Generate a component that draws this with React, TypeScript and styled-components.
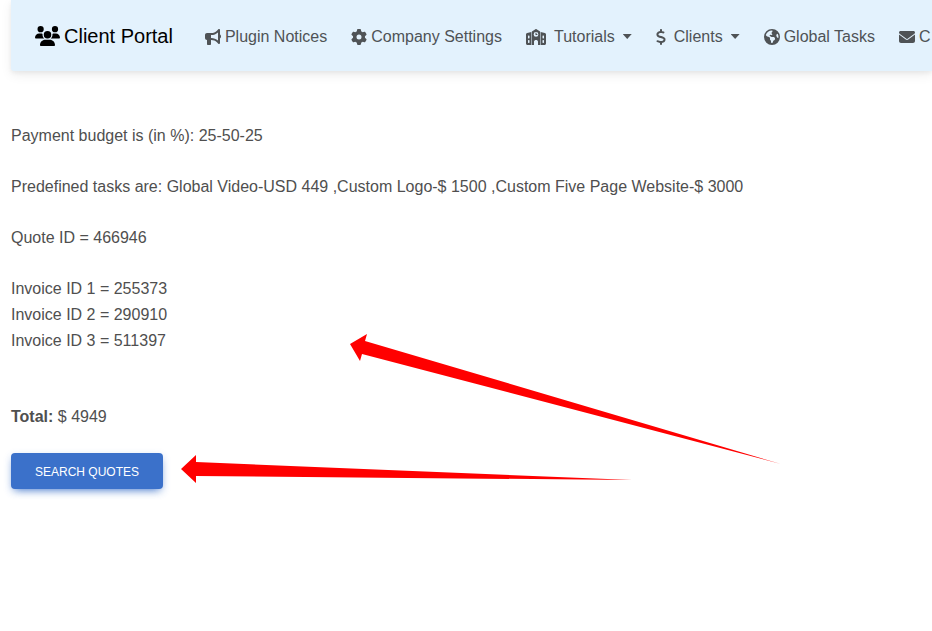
import React from "react";
import styled, { createGlobalStyle } from "styled-components";
import {
  FaBullhorn,
  FaDollarSign,
  FaEarthAmericas,
  FaEnvelope,
  FaGear,
  FaUsers,
} from "react-icons/fa6";

const GlobalStyle = createGlobalStyle`
  *, *::before, *::after { box-sizing: border-box; }
  body {
    margin: 0;
    background: #fff;
    color: #4f4f4f;
    font-family: "Liberation Sans", Arial, sans-serif;
    font-size: 16px;
    line-height: 26px;
  }
`;

const Page = styled.div`
  min-height: 100vh;
  padding-left: 11px;
  overflow: hidden;
`;

const Navbar = styled.header`
  display: flex;
  align-items: center;
  gap: 32px;
  height: 71px;
  padding-left: 24px;
  white-space: nowrap;
  background: #e3f2fd;
  border-radius: 0 0 0 3px;
  box-shadow: 0 4px 12px rgba(0, 0, 0, 0.07), 0 2px 4px rgba(0, 0, 0, 0.05);
`;

const Brand = styled.a`
  display: flex;
  flex: none;
  align-items: center;
  gap: 4px;
  color: #000;
  font-size: 20px;
  text-decoration: none;

  svg {
    width: 25px;
    height: 20px;
  }
`;

const NavList = styled.nav`
  display: flex;
  flex: none;
  align-items: center;
  gap: 24px;
  padding-top: 2px;
`;

const NavLink = styled.a<{ $gap: number; $icon: number }>`
  display: flex;
  align-items: center;
  gap: ${({ $gap }) => $gap}px;
  color: #4f5356;
  text-decoration: none;

  svg {
    width: ${({ $icon }) => $icon}px;
    height: 16px;
  }
`;

const NavButton = styled(NavLink).attrs({ as: "button", type: "button" })`
  padding: 0;
  border: 0;
  background: none;
  font: inherit;
  cursor: pointer;

  &::after {
    content: "";
    width: 9px;
    height: 5px;
    background: currentColor;
    clip-path: polygon(0 0, 100% 0, 50% 100%);
  }
`;

const Content = styled.main`
  display: flex;
  flex-direction: column;
  align-items: flex-start;
  gap: 25px;
  padding-top: 52px;
`;

const Line = styled.p`
  margin: 0;
`;

const Invoices = styled.ul`
  margin: 0 0 25px;
  padding: 0;
  list-style: none;
`;

const Summary = styled.div`
  display: flex;
  flex-direction: column;
  align-items: flex-start;
  gap: 23px;
`;

const SearchButton = styled.button`
  height: 36px;
  padding: 1px 24px 0;
  border: 0;
  border-radius: 4px;
  background: #3b71ca;
  color: #fff;
  font: inherit;
  font-size: 12px;
  font-weight: 500;
  line-height: 20px;
  text-transform: uppercase;
  box-shadow: 0 4px 9px -4px #3b71ca, 0 3px 8px rgba(59, 113, 202, 0.2);
  cursor: pointer;
`;

const Annotations = styled.svg`
  position: absolute;
  top: 0;
  left: 0;
  pointer-events: none;
`;

function SchoolIcon() {
  return (
    <svg viewBox="0 0 640 512" fill="currentColor" fillRule="evenodd" aria-hidden="true">
      <path d="M0 172C0 149 16 130 38 125L172 95V512H48C21 512 0 491 0 464ZM64 224V288C64 297 71 304 80 304H96C105 304 112 297 112 288V224C112 215 105 208 96 208H80C71 208 64 215 64 224ZM64 368V432C64 441 71 448 80 448H96C105 448 112 441 112 432V368C112 359 105 352 96 352H80C71 352 64 359 64 368Z" />
      <path d="M640 172C640 149 624 130 602 125L468 95V512H592C619 512 640 491 640 464ZM528 224C528 215 535 208 544 208H560C569 208 576 215 576 224V288C576 297 569 304 560 304H544C535 304 528 297 528 288ZM528 368C528 359 535 352 544 352H560C569 352 576 359 576 368V432C576 441 569 448 560 448H544C535 448 528 441 528 432Z" />
      <path d="M188 81L302 5C313 -2 327 -2 338 5L452 81V512H384V400C384 373 355 352 320 352C285 352 256 373 256 400V512H188ZM320 96A76 76 0 1 0 320 248A76 76 0 1 0 320 96ZM304 116H336V160H364V192H304Z" />
    </svg>
  );
}

export default function App() {
  return (
    <Page>
      <GlobalStyle />
      <Navbar>
        <Brand href="#">
          <FaUsers />
          Client Portal
        </Brand>
        <NavList>
          <NavLink href="#" $gap={4} $icon={16}>
            <FaBullhorn />
            Plugin Notices
          </NavLink>
          <NavLink href="#" $gap={4} $icon={16}>
            <FaGear />
            Company Settings
          </NavLink>
          <NavButton $gap={8} $icon={20}>
            <SchoolIcon />
            Tutorials
          </NavButton>
          <NavButton $gap={8} $icon={10}>
            <FaDollarSign />
            Clients
          </NavButton>
          <NavLink href="#" $gap={4} $icon={16}>
            <FaEarthAmericas />
            Global Tasks
          </NavLink>
          <NavLink href="#" $gap={4} $icon={16}>
            <FaEnvelope />
            C
          </NavLink>
        </NavList>
      </Navbar>

      <Content>
        <Line>Payment budget is (in %): 25-50-25</Line>
        <Line>
          Predefined tasks are: Global Video-USD 449 ,Custom Logo-$ 1500 ,Custom
          Five Page Website-$ 3000
        </Line>
        <Line>Quote ID = 466946</Line>
        <Invoices>
          <li>Invoice ID 1 = 255373</li>
          <li>Invoice ID 2 = 290910</li>
          <li>Invoice ID 3 = 511397</li>
        </Invoices>
        <Summary>
          <Line>
            <strong>Total:</strong> $ 4949
          </Line>
          <SearchButton type="button">Search quotes</SearchButton>
        </Summary>
      </Content>

      <Annotations width="800" height="500" viewBox="0 0 800 500" fill="#f00" aria-hidden="true">
        <path d="M350 344 L367 334 L365 341 L781 464 L362 354 L360 361 Z" />
        <path d="M181 469 L196 455 V462 L632 480 L196 476 V483 Z" />
      </Annotations>
    </Page>
  );
}
